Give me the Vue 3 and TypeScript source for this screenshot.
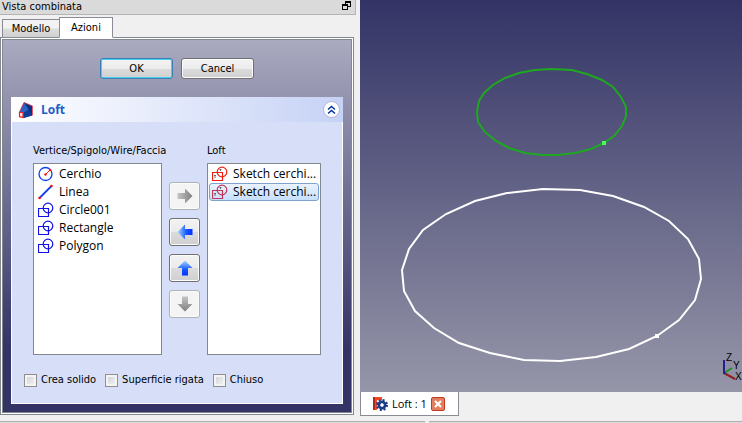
<script setup lang="ts">
import { ref } from 'vue'

type IconName = 'circle' | 'line' | 'shape'

interface Vertex {
  label: string
  icon: IconName
}

const vertices: Vertex[] = [
  { label: 'Cerchio', icon: 'circle' },
  { label: 'Linea', icon: 'line' },
  { label: 'Circle001', icon: 'shape' },
  { label: 'Rectangle', icon: 'shape' },
  { label: 'Polygon', icon: 'shape' },
]

const profiles = ref<string[]>(['Sketch cerchi...', 'Sketch cerchi...'])
const selected = ref(1)

const moves = [
  { name: 'Aggiungi', angle: 0, enabled: false },
  { name: 'Rimuovi', angle: 180, enabled: true },
  { name: 'Sposta su', angle: 270, enabled: true },
  { name: 'Sposta giù', angle: 90, enabled: false },
]

const options = ref([
  { label: 'Crea solido', checked: false },
  { label: 'Superficie rigata', checked: false },
  { label: 'Chiuso', checked: false },
])
</script>

<template>
  <div class="window">
    <div class="main">
      <aside class="dock">
        <header class="dock-title">
          <span>Vista combinata</span>
          <button class="float-btn" type="button" aria-label="Sgancia">
            <svg width="9" height="9" viewBox="0 0 9 9" shape-rendering="crispEdges">
              <path d="M3 0h6v6H6V5h2V2H4v1H3z M0 3h6v6H0z M1 5v3h4V5z" fill="#000" fill-rule="evenodd" />
            </svg>
          </button>
        </header>
        <nav class="tabs">
          <button class="tab" type="button">Modello</button>
          <button class="tab active" type="button">Azioni</button>
        </nav>
        <div class="pane">
          <div class="task">
            <div class="dialog-buttons">
              <button class="push default" type="button">OK</button>
              <button class="push" type="button">Cancel</button>
            </div>
            <section class="group">
              <header class="group-head">
                <svg width="16" height="18" viewBox="0 0 16 18">
                  <path d="M1.500 11 6 1.500 14 5V14.500L5.500 17z" fill="#1450b8" />
                  <path d="M6 1.500 14 5V14.500L10.500 8.500z" fill="#08307f" />
                  <path d="M6 1.500 10.500 8.500 5.500 12 1.500 11z" fill="#2c62c4" />
                  <path d="M10.500 8.500 14 14.500 5.500 17V12z" fill="#0c3c98" />
                  <path d="M1.500 11 6 1.500 14.500 5V14.500" fill="none" stroke="#e83040" stroke-width="0.8" />
                  <path d="M1.500 11.500h3.500v5l-3.500-.8z" fill="#ffe8e8" stroke="#e82030" stroke-width="1.200" />
                </svg>
                <h1>Loft</h1>
                <button class="collapse" type="button" aria-label="Comprimi">
                  <svg width="9" height="10" viewBox="0 0 9 10">
                    <path d="M1 4.5 4.5 1.5 8 4.5M1 8.5 4.5 5.5 8 8.5" fill="none" stroke="#0033a0" stroke-width="1.5" />
                  </svg>
                </button>
              </header>
              <div class="group-body">
                <div class="columns">
                  <div class="column">
                    <h2>Vertice/Spigolo/Wire/Faccia</h2>
                    <ul class="list">
                      <li v-for="v in vertices" :key="v.label">
                        <svg width="16" height="16" viewBox="0 0 16 16" fill="none">
                          <template v-if="v.icon === 'circle'">
                            <circle cx="7.5" cy="8" r="6.5" stroke="#1040f0" stroke-width="1.3" />
                            <path d="M7.5 8.5 12 4" stroke="#ff2020" stroke-width="1" />
                            <circle cx="7.5" cy="8.5" r="1.2" fill="#ff1010" />
                            <circle cx="12" cy="4" r="1.2" fill="#ff1010" />
                          </template>
                          <template v-else-if="v.icon === 'line'">
                            <path d="M1.5 14 13.5 2" stroke="#1040f0" stroke-width="1.8" />
                            <circle cx="1.5" cy="14" r="1.3" fill="#ff1010" />
                            <circle cx="13.5" cy="2" r="1.3" fill="#ff1010" />
                          </template>
                          <template v-else>
                            <path d="M0.5 6.5h10v8h-10z" stroke="#1010e8" stroke-width="1.2" />
                            <circle cx="10" cy="6" r="4.8" stroke="#1010e8" stroke-width="1.2" />
                          </template>
                        </svg>
                        <span>{{ v.label }}</span>
                      </li>
                    </ul>
                  </div>
                  <div class="moves">
                    <button
                      v-for="m in moves"
                      :key="m.name"
                      class="move"
                      type="button"
                      :aria-label="m.name"
                      :disabled="!m.enabled"
                    >
                      <svg width="16" height="16" viewBox="0 0 16 16">
                        <defs>
                          <linearGradient :id="'arrow' + m.angle" x1="0" x2="1" y1="0" y2="0">
                            <stop offset="0" :stop-color="m.enabled ? '#0030ff' : '#c4c4c4'" />
                            <stop offset="0.4" :stop-color="m.enabled ? '#1458ff' : '#a8a8a8'" />
                            <stop offset="1" :stop-color="m.enabled ? '#a8d8ff' : '#808080'" />
                          </linearGradient>
                        </defs>
                        <path
                          d="M0.5 5H8V0.5L15.500 8 8 15.500V11H0.500z"
                          :fill="`url(#arrow${m.angle})`"
                          :transform="`rotate(${m.angle} 8 8)`"
                        />
                      </svg>
                    </button>
                  </div>
                  <div class="column">
                    <h2>Loft</h2>
                    <ul class="list">
                      <li
                        v-for="(p, i) in profiles"
                        :key="i"
                        :class="{ selected: i === selected }"
                        @click="selected = i"
                      >
                        <svg width="16" height="16" viewBox="0 0 16 16" fill="none">
                          <g :stroke="i === selected ? '#c03858' : '#f02010'" stroke-width="1.2">
                            <path d="M0.500 6.500h10v8h-10z" />
                            <circle cx="10" cy="6" r="4.800" />
                          </g>
                          <path d="M3 12V9M2 10l1-1 1 1M8.500 5V3M7.500 4l1-1 1 1" stroke="#505058" stroke-width="0.8" />
                        </svg>
                        <span>{{ p }}</span>
                      </li>
                    </ul>
                  </div>
                </div>
                <div class="options">
                  <label v-for="o in options" :key="o.label">
                    <input v-model="o.checked" type="checkbox" />
                    <span>{{ o.label }}</span>
                  </label>
                </div>
              </div>
            </section>
          </div>
        </div>
      </aside>
      <main class="view">
        <svg class="scene" viewBox="360 0 382 392" preserveAspectRatio="xMaxYMin slice">
          <polygon
            class="profile green"
            points="551,69 572,70 587,74 602,80 613,87 621,97 626,107 626,116 622,126 614,136 604,143 591,149 575,153 558,155 542,155 525,153 509,148 496,141 485,132 478,122 477,112 479,101 484,93 493,85 505,78 519,73 535,70"
          />
          <rect x="602" y="141" width="4" height="4" fill="#40ff50" />
          <polygon
            class="profile white"
            points="543,189 580,190 613,196 644,207 669,221 688,239 699,259 701,279 695,300 679,320 657,336 629,349 596,357 560,361 524,360 490,353 459,343 434,328 415,311 404,291 402,270 409,249 423,230 446,214 475,201 507,193"
          />
          <rect x="655" y="334" width="4" height="4" fill="#fff" />
          <g fill="none" stroke-width="2">
            <path d="M724 373 732 368" stroke="#209020" />
            <path d="M724 373 735 379" stroke="#902020" />
            <path d="M724 374V360" stroke="#202090" />
          </g>
          <g class="axis">
            <text x="726" y="361">Z</text>
            <text x="733" y="369">Y</text>
            <text x="735" y="380">X</text>
          </g>
        </svg>
        <div class="doc-tabs">
          <div class="doc-tab">
            <svg width="16" height="16" viewBox="0 0 16 16">
              <path d="M1 1h9v3H5v2h4v3H5v5H1z" fill="#f04820" />
              <path d="M1 1h2v13H1z" fill="#b82818" />
              <circle cx="10" cy="9" r="3" fill="none" stroke="#183c88" stroke-width="3" />
              <circle cx="10" cy="9" r="5" fill="none" stroke="#183c88" stroke-width="2" stroke-dasharray="2 1.93" />
              <circle cx="10" cy="9" r="1.700" fill="#fff" />
            </svg>
            <span>Loft : 1</span>
            <button class="close" type="button" aria-label="Chiudi">
              <svg width="8" height="8" viewBox="0 0 8 8">
                <path d="M1 1 7 7M7 1 1 7" stroke="#fff" stroke-width="2" />
              </svg>
            </button>
          </div>
        </div>
      </main>
    </div>
    <footer class="status"><span></span><span></span></footer>
  </div>
</template>

<style>
body {
  margin: 0;
  background: #f0f0f0;
}
</style>

<style scoped>
.window {
  display: flex;
  flex-direction: column;
  height: 100vh;
  overflow: hidden;
  background: #f0f0f0;
  color: #000;
  font-family: "DejaVu Sans Condensed", "Liberation Sans", sans-serif;
  font-size: 11px;
  line-height: 14px;
}
.window * {
  box-sizing: border-box;
}
button {
  padding: 0;
  font: inherit;
  color: inherit;
}
svg {
  display: block;
  flex: none;
}
.main {
  display: grid;
  grid-template-columns: 354px 1fr;
  column-gap: 6px;
  flex: 1;
  min-height: 0;
}
.dock {
  display: flex;
  flex-direction: column;
  padding-bottom: 6px;
}
.dock-title {
  display: flex;
  align-items: flex-start;
  justify-content: space-between;
  height: 15px;
  margin-right: -2px;
  padding: 0 4px 0 2px;
  background: #dadada;
  border-bottom: 1px solid #b4b4b4;
  border-right: 1px solid #b4b4b4;
  line-height: 13px;
}
.float-btn {
  border: 0;
  background: none;
  padding-top: 1px;
}
.tabs {
  display: flex;
  align-items: flex-end;
  height: 23px;
  padding-left: 2px;
  margin-bottom: -1px;
  z-index: 1;
}
.tab {
  width: 57px;
  height: 19px;
  border: 1px solid #898c95;
  border-right: 0;
  background: linear-gradient(#f2f2f2 45%, #dcdcdc 55%, #d0d0d0);
}
.tab.active {
  width: 54px;
  height: 21px;
  border-right: 1px solid #898c95;
  border-bottom-color: #fff;
  background: #fff;
}
.pane {
  flex: 1;
  display: flex;
  padding: 1px;
  border: 1px solid #828790;
  background: #fff;
}
.task {
  flex: 1;
  padding: 18px 8px 8px;
  border: 1px solid #828790;
  background: linear-gradient(#aaaac0, #333366 83%);
  display: flex;
  flex-direction: column;
}
.dialog-buttons {
  display: flex;
  justify-content: center;
  gap: 8px;
  margin-bottom: 18px;
}
.push {
  width: 73px;
  height: 21px;
  border: 1px solid #707070;
  border-radius: 3px;
  background: linear-gradient(#f4f4f4, #ebebeb 50%, #dcdcdc 51%, #cfcfcf);
  box-shadow: inset 0 0 0 1px #fbfbfb;
}
.push.default {
  border-color: #3c7fb1;
  box-shadow: inset 0 0 0 1px #48d0f0;
}
.group {
  flex: 1;
  display: flex;
  flex-direction: column;
}
.group-head {
  display: flex;
  align-items: center;
  gap: 7px;
  height: 25px;
  padding: 0 3px 0 7px;
  background: linear-gradient(90deg, #fff, #c6d2f6);
}
.group-head h1 {
  flex: 1;
  margin: 0;
  color: #215dc6;
  font-family: "Open Sans", sans-serif;
  font-size: 12px;
  font-weight: 700;
}
.collapse {
  display: grid;
  place-items: center;
  width: 17px;
  height: 17px;
  border: 1px solid #b0b4d8;
  border-radius: 50%;
  background: #fff;
}
.group-body {
  flex: 1;
  display: flex;
  flex-direction: column;
  padding: 22px 21px 16px;
  border: 1px solid #fff;
  border-top: 0;
  background: #d6dff7;
}
.columns {
  flex: 1;
  display: grid;
  grid-template-columns: 129px 31px 1fr;
  column-gap: 7px;
}
.column {
  display: flex;
  flex-direction: column;
  min-width: 0;
}
.column h2 {
  margin: 0 0 5px;
  font-size: 11px;
  line-height: 14px;
  font-weight: 400;
  white-space: nowrap;
}
.list {
  flex: 1;
  margin: 0;
  padding: 1px;
  list-style: none;
  border: 1px solid #828790;
  background: #fff;
  font-family: "Open Sans", sans-serif;
  font-size: 12px;
}
.list li {
  display: flex;
  align-items: center;
  gap: 5px;
  height: 18px;
  padding: 0 2px;
  border: 1px solid transparent;
  border-radius: 3px;
  white-space: nowrap;
}
.list li.selected {
  border-color: #7da2ce;
  background: linear-gradient(#eaf3fe, #c6dffc);
}
.moves {
  display: flex;
  flex-direction: column;
  gap: 8px;
  padding-top: 38px;
}
.move {
  display: grid;
  place-items: center;
  width: 31px;
  height: 28px;
  border: 1px solid #707070;
  border-radius: 3px;
  background: linear-gradient(#f2f2f2, #ebebeb 50%, #dcdcdc 51%, #cfcfcf);
  box-shadow: inset 0 0 0 1px #fbfbfb;
}
.move:disabled {
  border-color: #adb2b5;
  background: #f4f4f4;
}
.options {
  display: flex;
  gap: 9px;
  margin: 18px 0 0 -9px;
}
.options label {
  display: flex;
  align-items: center;
  gap: 4px;
  white-space: nowrap;
}
.options input {
  appearance: none;
  width: 13px;
  height: 13px;
  margin: 0;
  border: 1px solid #8e8f8f;
  background: linear-gradient(135deg, #cbcfd5, #f6f6f6);
  box-shadow: inset 0 0 0 2px #f4f4f4;
}
.options input:checked {
  background: #215dc6;
}
.view {
  display: flex;
  flex-direction: column;
  min-width: 0;
}
.scene {
  flex: 1;
  min-height: 0;
  width: 100%;
  background: linear-gradient(#333366, #9696a9);
}
.profile {
  fill: none;
  stroke-width: 2;
}
.profile.green {
  stroke: #1fa81f;
}
.profile.white {
  stroke: #fff;
}
.axis {
  font-family: "Liberation Sans", sans-serif;
  font-size: 10px;
}
.doc-tabs {
  height: 29px;
}
.doc-tab {
  display: inline-flex;
  align-items: center;
  gap: 4px;
  height: 24px;
  padding: 0 13px 0 11px;
  border: 1px solid #898c95;
  border-top: 0;
  background: #fff;
}
.doc-tab span {
  font-family: "Open Sans", sans-serif;
}
.close {
  display: grid;
  place-items: center;
  width: 14px;
  height: 14px;
  border: 1px solid #c83820;
  border-radius: 2px;
  background: #e08060;
}
.status {
  display: grid;
  grid-template-columns: 425px 1fr;
  gap: 4px;
  height: 2px;
}
.status span {
  border-top: 1px solid #b0b0b0;
  background: #dadada;
}
</style>
